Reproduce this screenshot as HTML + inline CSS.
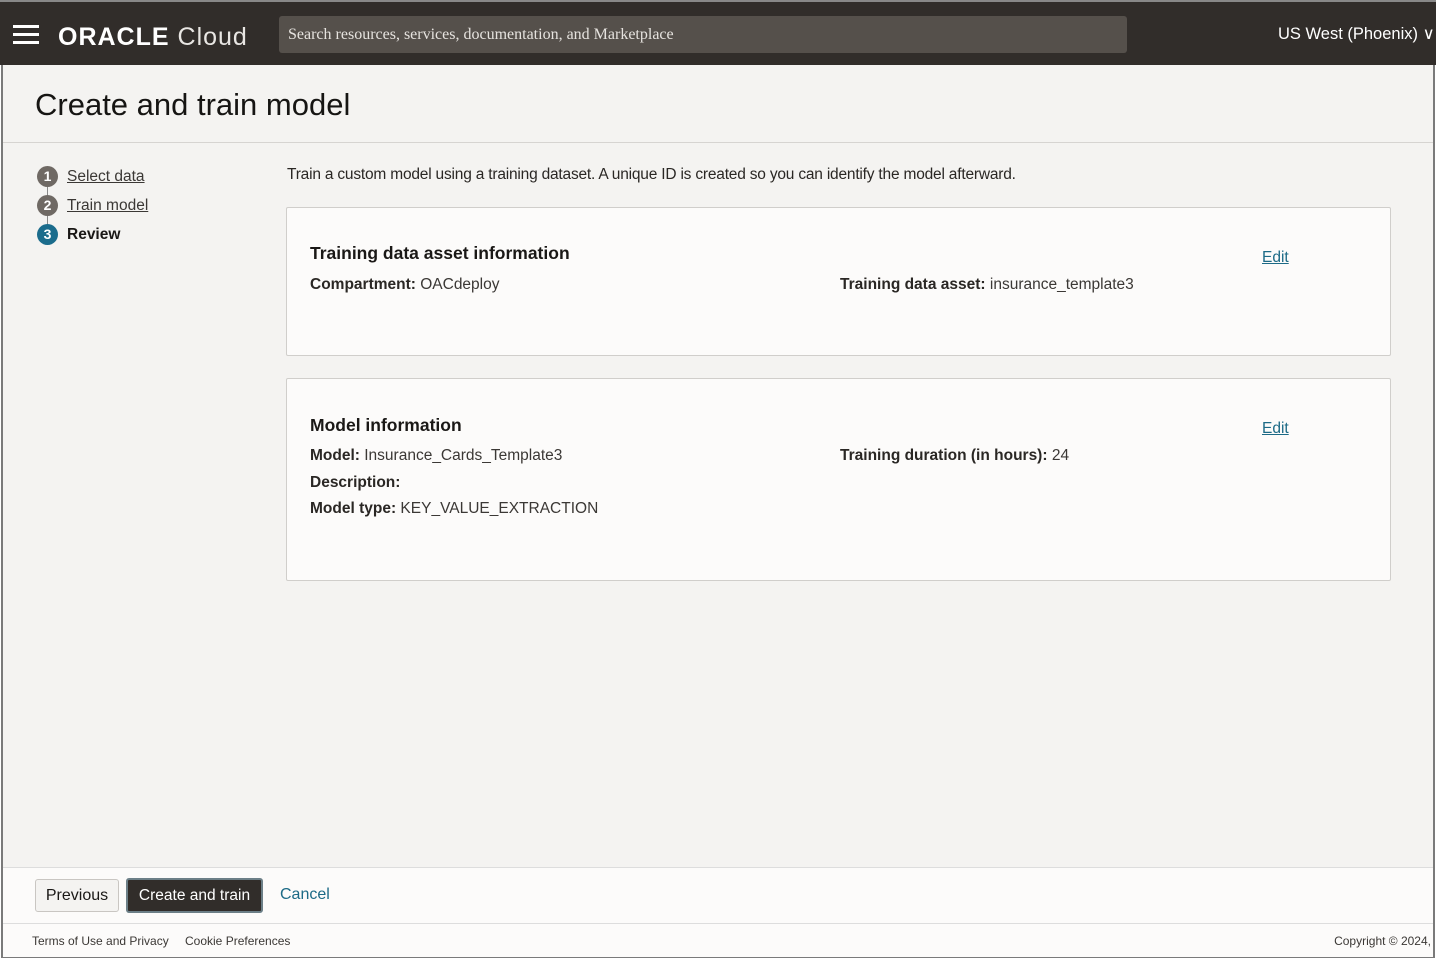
<!DOCTYPE html>
<html><head><style>
*{margin:0;padding:0;box-sizing:border-box}
body{width:1436px;height:959px;background:#fff;font-family:"Liberation Sans",sans-serif;color:#1a1816;position:relative;overflow:hidden}
.frame{position:absolute;left:1px;top:1px;width:1434px;height:957px;border:2px solid #7a7a7a;border-top:none;background:#f4f3f1}
.hdr{position:absolute;left:0;top:0;width:1436px;height:65px;background:#312d2a;border-top:2px solid #888;overflow:hidden}
.title{position:absolute;left:35px;top:87px;font-size:31px;color:#161513}
.hr{position:absolute;left:3px;width:1430px;height:1px;background:#d6d4d1}
.step{position:absolute;left:37px;font-size:15.5px;display:flex;align-items:center}
.step .c{width:21px;height:21px;border-radius:50%;background:#6f6964;color:#fff;font-size:14px;font-weight:bold;text-align:center;line-height:21px;margin-right:9px}
.step a{color:#3b3835;text-decoration:underline}
.card{position:absolute;left:286px;width:1105px;background:#fcfbfa;border:1px solid #d0cecb;border-radius:2px}
.card h3{position:absolute;left:23px;font-size:17.5px;font-weight:bold}
.f{position:absolute;font-size:15.5px;color:#3b3835;white-space:nowrap}
.f b{color:#2a2724}
.edit{position:absolute;left:975px;color:#1c6a86;text-decoration:underline;font-size:15.5px}
.foot{position:absolute;left:3px;top:867px;width:1430px;height:90px;background:#fcfbfa;border-top:1px solid #ddd}
</style></head><body>
<div class="frame"></div>
<div class="hdr">
<div style="position:absolute;left:13px;top:23px;width:26px">
<div style="height:3px;background:#fff;margin-bottom:5px"></div><div style="height:3px;background:#fff;margin-bottom:5px"></div><div style="height:3px;background:#fff"></div></div>
<div style="position:absolute;left:58px;top:21px;color:#fff;font-size:25px;letter-spacing:1px;white-space:nowrap"><span style="font-weight:bold">ORACLE</span> <span style="font-weight:normal;color:#e8e6e3">Cloud</span></div>
<div style="position:absolute;left:279px;top:14px;width:848px;height:37px;background:#55504b;border-radius:3px;color:#e6e3df;font-size:16px;line-height:37px;padding-left:9px;font-family:'Liberation Serif',serif">Search resources, services, documentation, and Marketplace</div>
<div style="position:absolute;left:1278px;top:22px;color:#fff;font-size:16.5px;white-space:nowrap">US West (Phoenix) ∨</div>
</div>
<div class="title">Create and train model</div>
<div class="hr" style="top:142px"></div>
<div style="position:absolute;left:47px;top:186px;width:1px;height:40px;background:#888"></div>
<div class="step" style="top:166px"><span class="c">1</span><a>Select data</a></div>
<div class="step" style="top:195px"><span class="c">2</span><a>Train model</a></div>
<div class="step" style="top:224px"><span class="c" style="background:#1b6c8c">3</span><b>Review</b></div>
<div style="position:absolute;left:287px;top:166px;font-size:15.5px;letter-spacing:-0.2px;color:#2a2724;white-space:nowrap">Train a custom model using a training dataset. A unique ID is created so you can identify the model afterward.</div>
<div class="card" style="top:207px;height:149px">
<h3 style="top:35px">Training data asset information</h3>
<div class="f" style="left:23px;top:68px"><b>Compartment:</b> OACdeploy</div>
<div class="f" style="left:553px;top:68px"><b>Training data asset:</b> insurance_template3</div>
<a class="edit" style="top:41px">Edit</a>
</div>
<div class="card" style="top:378px;height:203px">
<h3 style="top:36px">Model information</h3>
<div class="f" style="left:23px;top:68px"><b>Model:</b> Insurance_Cards_Template3</div>
<div class="f" style="left:23px;top:95px"><b>Description:</b></div>
<div class="f" style="left:23px;top:121px"><b>Model type:</b> KEY_VALUE_EXTRACTION</div>
<div class="f" style="left:553px;top:68px"><b>Training duration (in hours):</b> 24</div>
<a class="edit" style="top:41px">Edit</a>
</div>
<div class="foot">
<div style="position:absolute;left:32px;top:11px;width:84px;height:33px;border:1px solid #c9c6c2;border-radius:3px;background:#f4f3f1;font-size:16px;text-align:center;line-height:31px">Previous</div>
<div style="position:absolute;left:123px;top:10px;width:137px;height:35px;border:2px solid #6c7f87;border-radius:3px;background:#312d2a;color:#fff;font-size:15.5px;text-align:center;line-height:31px">Create and train</div>
<div style="position:absolute;left:277px;top:18px;font-size:16px;color:#1c6a86">Cancel</div>
<div style="position:absolute;left:0;top:55px;width:1430px;height:1px;background:#ddd"></div>
<div style="position:absolute;left:29px;top:66px;font-size:12px;color:#3b3835">Terms of Use and Privacy</div>
<div style="position:absolute;left:182px;top:66px;font-size:12px;color:#3b3835">Cookie Preferences</div>
<div style="position:absolute;right:2px;top:66px;font-size:12px;color:#3b3835">Copyright © 2024,</div>
</div>
</body></html>
